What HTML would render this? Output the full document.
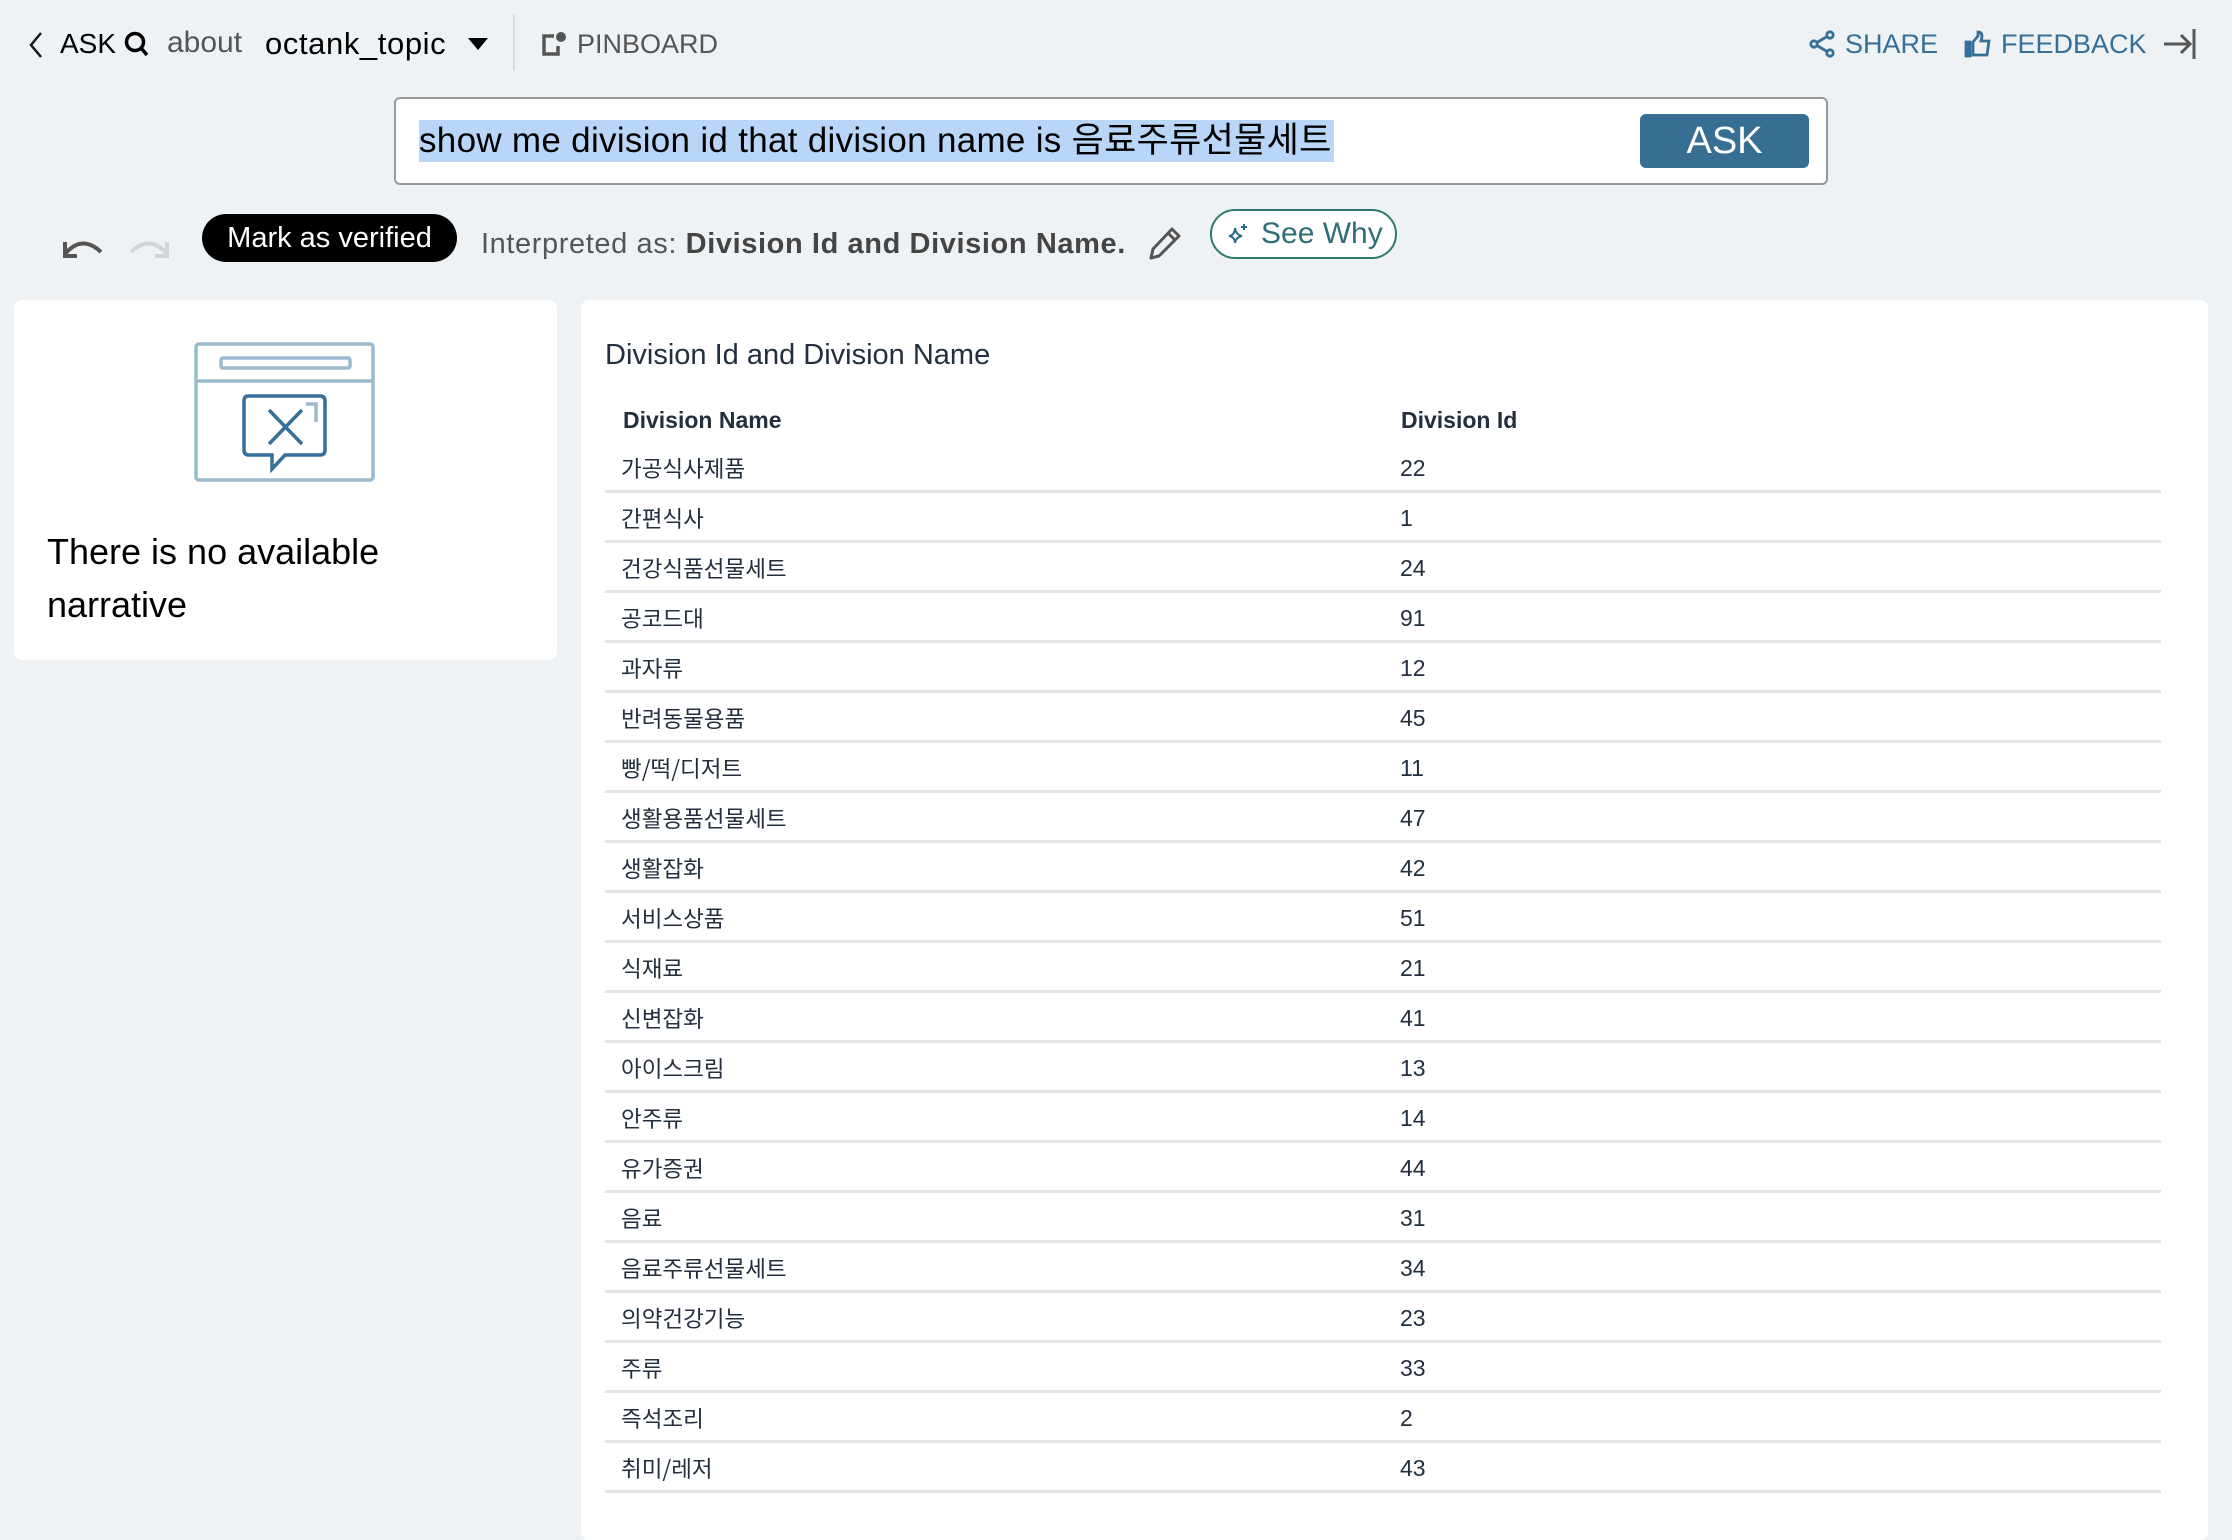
<!DOCTYPE html>
<html><head><meta charset="utf-8"><style>
*{margin:0;padding:0;box-sizing:border-box}
body{width:2232px;height:1524px;background:#eef2f5;font-family:"Liberation Sans","Noto Sans CJK KR",sans-serif;position:relative;overflow:hidden;color:#16191f}
.a{position:absolute;white-space:nowrap}
.t{font-size:28px;line-height:1}
.row{position:absolute;left:605px;width:1556px;height:50px;border-bottom:3px solid #e4e4e4}
.row span{position:absolute;font-size:23px;line-height:24px;height:24px;color:#232f3e}
.row .c1{left:16px;top:10px;font-family:"Noto Sans CJK KR","Liberation Sans",sans-serif;font-size:22.5px;line-height:30px;height:30px}
.row .c2{left:795px;top:13px}
</style></head><body>
<!-- top bar -->
<svg class="a" style="left:28px;top:31px" width="16" height="28" viewBox="0 0 16 28"><path d="M13 2 L3 14 L13 26" fill="none" stroke="#16191f" stroke-width="2.5"/></svg>
<div class="a t" style="left:60px;top:30px;color:#000">ASK</div>
<svg class="a" style="left:123px;top:30px" width="28" height="28" viewBox="0 0 28 28"><circle cx="12" cy="12" r="8.5" fill="none" stroke="#000" stroke-width="3.5"/><path d="M18 18 L24 25" stroke="#000" stroke-width="3.5"/></svg>
<div class="a t" style="left:167px;top:28px;font-size:30px;color:#555">about</div>
<div class="a t" style="left:265px;top:28px;font-size:31px;letter-spacing:0.6px;color:#000">octank_topic</div>
<svg class="a" style="left:466px;top:36px" width="24" height="16" viewBox="0 0 24 16"><path d="M2 2 H22 L12 14Z" fill="#000"/></svg>
<div class="a" style="left:513px;top:15px;width:2px;height:56px;background:#d5d9dd"></div>
<svg class="a" style="left:540px;top:30px" width="28" height="28" viewBox="0 0 28 28"><path d="M14 6 H4 V24 H18 V16" fill="none" stroke="#555" stroke-width="3.5"/><circle cx="21" cy="7" r="5" fill="#555"/></svg>
<div class="a t" style="left:577px;top:31px;font-size:27px;color:#555">PINBOARD</div>

<svg class="a" style="left:1808px;top:30px" width="28" height="28" viewBox="0 0 28 28"><g fill="none" stroke="#366f97" stroke-width="2.8"><circle cx="6" cy="14" r="3.2"/><circle cx="22" cy="5" r="3.2"/><circle cx="22" cy="23" r="3.2"/><path d="M9 12.5 L19 6.5 M9 15.5 L19 21.5"/></g></svg>
<div class="a t" style="left:1845px;top:31px;font-size:27px;color:#366f97">SHARE</div>
<svg class="a" style="left:1964px;top:30px" width="28" height="28" viewBox="0 0 28 28"><g fill="none" stroke="#366f97" stroke-width="2.8"><path d="M2 12 H6 V26 H2Z" fill="#366f97"/><path d="M9 12 L14 6 L14 2 Q18 2 18 7 L17 11 H25 L23 25 H9Z"/></g></svg>
<div class="a t" style="left:2001px;top:31px;font-size:27px;color:#366f97">FEEDBACK</div>
<svg class="a" style="left:2162px;top:26px" width="36" height="36" viewBox="0 0 36 36"><g fill="none" stroke="#555" stroke-width="3"><path d="M2 18 H28 M19 9 L28 18 L19 27"/><path d="M32 3 V33"/></g></svg>

<!-- search -->
<div class="a" style="left:394px;top:97px;width:1434px;height:88px;background:#fff;border:2px solid #999;border-radius:6px"></div>
<div class="a" style="left:419px;top:120px;height:42px;background:#b9d6f8;font-size:35px;letter-spacing:0.3px;line-height:42px;color:#000;padding-right:2px">show me division id that division name is 음료주류선물세트</div>
<div class="a" style="left:1640px;top:114px;width:169px;height:54px;background:#376e94;border-radius:6px;color:#fff;font-size:38px;line-height:54px;text-align:center">ASK</div>

<!-- row2 -->
<svg class="a" style="left:60px;top:234px" width="46" height="26" viewBox="0 0 46 26"><g fill="none" stroke="#555" stroke-width="4"><path d="M5 20 Q22 0 41 18"/><path d="M5 8 V22 H17"/></g></svg>
<svg class="a" style="left:126px;top:234px" width="46" height="26" viewBox="0 0 46 26"><g fill="none" stroke="#d2d5d8" stroke-width="4"><path d="M41 20 Q24 0 5 18"/><path d="M41 8 V22 H29"/></g></svg>
<div class="a" style="left:202px;top:214px;width:255px;height:48px;background:#000;border-radius:24px;color:#fff;font-size:29px;line-height:48px;text-align:center">Mark as verified</div>
<div class="a" style="left:481px;top:228px;font-size:29px;letter-spacing:0.6px;color:#555">Interpreted as: <b style="color:#444">Division Id and Division Name.</b></div>
<svg class="a" style="left:1147px;top:225px" width="36" height="36" viewBox="0 0 36 36"><g fill="none" stroke="#555" stroke-width="3" stroke-linejoin="round"><path d="M25 4 L32 11 L12 31 L4 33 L6 24Z M21 8 L28 15"/></g></svg>
<div class="a" style="left:1210px;top:209px;width:187px;height:50px;border-radius:25px;border:2px solid #2f7a6a;background:#fff"></div>
<svg class="a" style="left:1226px;top:222px" width="24" height="24" viewBox="0 0 24 24"><g fill="none" stroke="#2d6b8a" stroke-width="2"><path d="M9 6 Q9 13 3 14 Q9 15 9 21 Q10 15 16 14 Q10 13 9 6Z"/><path d="M18 2 V8 M15 5 H21"/></g></svg>
<div class="a" style="left:1261px;top:217px;font-size:30px;color:#2e6e78">See Why</div>

<!-- left card -->
<div class="a" style="left:14px;top:300px;width:543px;height:360px;background:#fff;border-radius:8px"></div>
<svg class="a" style="left:190px;top:338px" width="190" height="150" viewBox="190 338 190 150">
<g fill="none" stroke-width="3.5">
<rect x="196" y="344" width="177" height="136" rx="3" stroke="#9bbacd"/>
<path d="M196 381 H373" stroke="#9bbacd"/>
<rect x="221" y="358" width="129" height="10" rx="2" stroke="#9bbacd"/>
<path d="M306 404 H316 V422" stroke="#9bbacd"/>
<path d="M248 396 H320 Q325 396 325 401 V450 Q325 455 320 455 H285 L272 469 V455 H249 Q244 455 244 450 V401 Q244 396 248 396Z" stroke="#366f97"/>
<path d="M269 410 L302 444 M302 410 L269 444" stroke="#366f97"/>
</g></svg>
<div class="a" style="left:47px;top:525px;font-size:36px;line-height:53px;color:#000;white-space:normal;width:420px">There is no available narrative</div>

<!-- right card -->
<div class="a" style="left:581px;top:300px;width:1627px;height:1240px;background:#fff;border-radius:8px"></div>
<div class="a" style="left:605px;top:339px;font-size:29px;color:#232f3e">Division Id and Division Name</div>
<div class="a" style="left:623px;top:407px;font-size:23px;font-weight:bold;color:#232f3e">Division Name</div>
<div class="a" style="left:1401px;top:407px;font-size:23px;font-weight:bold;color:#232f3e">Division Id</div>

<div class="row" style="top:443px"><span class="c1">가공식사제품</span><span class="c2">22</span></div>
<div class="row" style="top:493px"><span class="c1">간편식사</span><span class="c2">1</span></div>
<div class="row" style="top:543px"><span class="c1">건강식품선물세트</span><span class="c2">24</span></div>
<div class="row" style="top:593px"><span class="c1">공코드대</span><span class="c2">91</span></div>
<div class="row" style="top:643px"><span class="c1">과자류</span><span class="c2">12</span></div>
<div class="row" style="top:693px"><span class="c1">반려동물용품</span><span class="c2">45</span></div>
<div class="row" style="top:743px"><span class="c1">빵/떡/디저트</span><span class="c2">11</span></div>
<div class="row" style="top:793px"><span class="c1">생활용품선물세트</span><span class="c2">47</span></div>
<div class="row" style="top:843px"><span class="c1">생활잡화</span><span class="c2">42</span></div>
<div class="row" style="top:893px"><span class="c1">서비스상품</span><span class="c2">51</span></div>
<div class="row" style="top:943px"><span class="c1">식재료</span><span class="c2">21</span></div>
<div class="row" style="top:993px"><span class="c1">신변잡화</span><span class="c2">41</span></div>
<div class="row" style="top:1043px"><span class="c1">아이스크림</span><span class="c2">13</span></div>
<div class="row" style="top:1093px"><span class="c1">안주류</span><span class="c2">14</span></div>
<div class="row" style="top:1143px"><span class="c1">유가증권</span><span class="c2">44</span></div>
<div class="row" style="top:1193px"><span class="c1">음료</span><span class="c2">31</span></div>
<div class="row" style="top:1243px"><span class="c1">음료주류선물세트</span><span class="c2">34</span></div>
<div class="row" style="top:1293px"><span class="c1">의약건강기능</span><span class="c2">23</span></div>
<div class="row" style="top:1343px"><span class="c1">주류</span><span class="c2">33</span></div>
<div class="row" style="top:1393px"><span class="c1">즉석조리</span><span class="c2">2</span></div>
<div class="row" style="top:1443px"><span class="c1">취미/레저</span><span class="c2">43</span></div>
</body></html>
